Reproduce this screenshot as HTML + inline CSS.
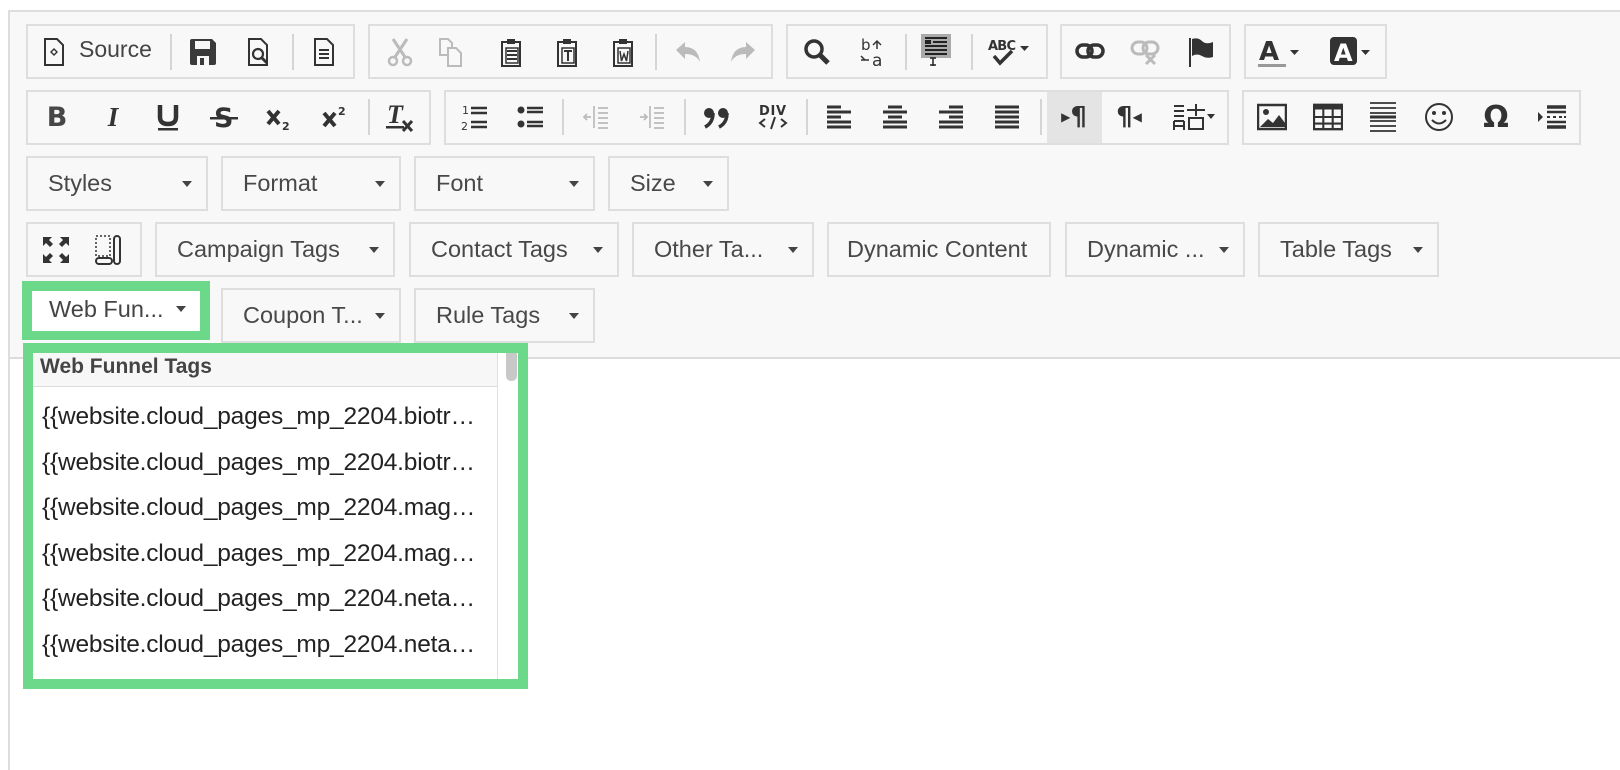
<!DOCTYPE html>
<html><head><meta charset="utf-8">
<style>
*{box-sizing:border-box;margin:0;padding:0}
body{width:1620px;height:754px;background:#fff;position:relative;overflow:hidden;font-family:"Liberation Sans",sans-serif;color:#333}
.ed{position:absolute;left:8px;top:10px;width:1640px;height:760px;border:2px solid #ddd;border-right:none;border-bottom:none}
.tb{position:absolute;left:10px;top:12px;width:1610px;height:347px;background:#f8f8f8;border-bottom:2px solid #dcdcdc}
.g{position:absolute;border:2px solid #dedede;background:#f8f8f8}
.ic{position:absolute;width:30px;height:30px;display:flex;align-items:center;justify-content:center;color:#474747}
.ic svg{display:block}
.sep{position:absolute;width:2px;height:36px;background:#d5d5d5}
.dd{position:absolute;border:2px solid #dedede;background:#f8f8f8;font-size:23.5px;color:#484848;height:55px;line-height:51px;padding-left:20px;white-space:nowrap}
.dd:after{content:"";position:absolute;right:14px;top:23px;border-left:5px solid transparent;border-right:5px solid transparent;border-top:6px solid #444}
.dd.na:after{display:none}
.dd.w:after{top:15px}
.txt{font-weight:bold;font-size:27px;font-family:"DejaVu Sans",sans-serif}
.it{white-space:nowrap;height:45.6px}
</style></head><body>
<div class="ed"></div>
<div class="tb"></div>

<!-- Row 1 -->
<div class="g" style="left:26px;top:24px;width:329px;height:55px"></div>
<div class="g" style="left:368px;top:24px;width:405px;height:55px"></div>
<div class="g" style="left:786px;top:24px;width:262px;height:55px"></div>
<div class="g" style="left:1060px;top:24px;width:171px;height:55px"></div>
<div class="g" style="left:1244px;top:24px;width:143px;height:55px"></div>

<div class="ic" style="left:39px;top:37px"><svg width="22" height="28" viewBox="0 0 22 28"><path d="M2 1h12l6 6v20H2z" fill="none" stroke="#333" stroke-width="2"/><path d="M11 10l4 4-4 4-4-4z" fill="#333"/><path d="M11 12l2 2-2 2-2-2z" fill="#fff"/></svg></div>
<div style="position:absolute;left:79px;top:36px;font-size:23px;color:#444">Source</div>
<div class="sep" style="left:170px;top:34px"></div>
<div class="ic" style="left:188px;top:37px"><svg width="28" height="28" viewBox="0 0 28 28"><path d="M1 3q0-2 2-2h20l4 4v20q0 2-2 2H3q-2 0-2-2z" fill="#3a3a3a"/><rect x="6" y="3" width="15" height="8" fill="#f8f8f8"/><rect x="8" y="18" width="12" height="9" fill="#f8f8f8"/><rect x="11" y="20" width="4" height="7" fill="#3a3a3a"/></svg></div>
<div class="ic" style="left:244px;top:37px"><svg width="24" height="28" viewBox="0 0 24 28"><path d="M2 1h12l6 6v20H2z" fill="none" stroke="#333" stroke-width="2"/><circle cx="11" cy="16" r="5" fill="none" stroke="#333" stroke-width="2.2"/><path d="M14 19l6 6" stroke="#333" stroke-width="3"/></svg></div>
<div class="sep" style="left:292px;top:34px"></div>
<div class="ic" style="left:309px;top:37px"><svg width="22" height="28" viewBox="0 0 22 28"><path d="M2 1h12l6 6v20H2z" fill="none" stroke="#333" stroke-width="2"/><path d="M6 12h10M6 16h10M6 20h10" stroke="#333" stroke-width="2"/></svg></div>

<div class="ic" style="left:385px;top:37px"><svg width="26" height="30" viewBox="0 0 26 30"><path d="M6 2l12 18M20 2L8 20" stroke="#bbb" stroke-width="3"/><circle cx="6" cy="24" r="4" fill="none" stroke="#bbb" stroke-width="2.5"/><circle cx="20" cy="24" r="4" fill="none" stroke="#bbb" stroke-width="2.5"/></svg></div>
<div class="ic" style="left:436px;top:37px"><svg width="26" height="30" viewBox="0 0 26 30"><path d="M2 2h8l4 4v12H2z" fill="none" stroke="#bbb" stroke-width="2"/><path d="M10 11h8l5 5v13H10z" fill="#f8f8f8" stroke="#bbb" stroke-width="2"/></svg></div>
<div class="ic" style="left:496px;top:37px"><svg width="26" height="30" viewBox="0 0 26 30"><path d="M4 5h18v24H4z" fill="none" stroke="#333" stroke-width="2"/><rect x="9" y="2" width="8" height="5" fill="#333"/><path d="M9 14h10M9 18h10M9 22h10" stroke="#333" stroke-width="2"/><rect x="8" y="11" width="12" height="15" fill="none" stroke="#333" stroke-width="1.5"/></svg></div>
<div class="ic" style="left:552px;top:37px"><svg width="26" height="30" viewBox="0 0 26 30"><path d="M4 5h18v24H4z" fill="none" stroke="#333" stroke-width="2"/><rect x="9" y="2" width="8" height="5" fill="#333"/><rect x="8" y="11" width="12" height="15" fill="none" stroke="#333" stroke-width="1.5"/><path d="M10 14h8M14 14v10" stroke="#333" stroke-width="2"/></svg></div>
<div class="ic" style="left:608px;top:37px"><svg width="26" height="30" viewBox="0 0 26 30"><path d="M4 5h18v24H4z" fill="none" stroke="#333" stroke-width="2"/><rect x="9" y="2" width="8" height="5" fill="#333"/><rect x="8" y="11" width="12" height="15" fill="none" stroke="#333" stroke-width="1.5"/><path d="M10 14l1.5 10 2.5-7 2.5 7 1.5-10" fill="none" stroke="#333" stroke-width="1.5"/></svg></div>
<div class="sep" style="left:655px;top:34px"></div>
<div class="ic" style="left:673px;top:37px"><svg width="28" height="22" viewBox="0 0 28 22"><path d="M2 9l9-8v5q13 0 15 15q-4-8-15-8v5z" fill="#bbb"/></svg></div>
<div class="ic" style="left:728px;top:37px"><svg width="28" height="22" viewBox="0 0 28 22"><path d="M26 9l-9-8v5Q4 6 2 21q4-8 15-8v5z" fill="#bbb"/></svg></div>

<div class="ic" style="left:802px;top:37px"><svg width="28" height="28" viewBox="0 0 28 28"><circle cx="11" cy="11" r="8" fill="none" stroke="#333" stroke-width="3.5"/><path d="M17 17l8 8" stroke="#333" stroke-width="5"/></svg></div>
<div class="ic" style="left:858px;top:37px"><svg width="28" height="32" viewBox="0 0 28 32"><text x="2" y="14" font-size="15" font-family="DejaVu Sans" fill="#333">b</text><text x="13" y="30" font-size="17" font-family="DejaVu Sans" fill="#333">a</text><path d="M14 9l4-4 4 4M18 5v8M2 20l4 4M2 24h8" fill="none" stroke="#333" stroke-width="1.5"/></svg></div>
<div class="sep" style="left:905px;top:34px"></div>
<div class="ic" style="left:921px;top:35px"><svg width="30" height="32" viewBox="0 0 30 32"><rect x="0" y="0" width="30" height="24" fill="#aaa"/><path d="M4 4h22M12 8h14M4 12h22M4 16h22M4 20h22" stroke="#222" stroke-width="2"/><rect x="4" y="6" width="6" height="4" fill="#222"/><path d="M12 24v8M9 24h6M9 31h6" stroke="#222" stroke-width="1.5"/></svg></div>
<div class="sep" style="left:971px;top:34px"></div>
<div class="ic" style="left:988px;top:37px;width:44px"><svg width="44" height="32" viewBox="0 0 44 32"><text x="0" y="14" font-size="13" font-family="DejaVu Sans" font-weight="bold" fill="#333" textLength="28">ABC</text><path d="M6 20l6 7 12-12" fill="none" stroke="#333" stroke-width="3.5"/><path d="M32 10h9l-4.5 5z" fill="#333"/></svg></div>

<div class="ic" style="left:1075px;top:37px"><svg width="30" height="20" viewBox="0 0 30 20"><rect x="2" y="3" width="15" height="12" rx="6" fill="none" stroke="#333" stroke-width="3.5"/><rect x="13" y="3" width="15" height="12" rx="6" fill="none" stroke="#333" stroke-width="3.5"/></svg></div>
<div class="ic" style="left:1130px;top:37px"><svg width="30" height="30" viewBox="0 0 30 30"><rect x="2" y="5" width="15" height="12" rx="6" fill="none" stroke="#bbb" stroke-width="3"/><rect x="13" y="5" width="15" height="12" rx="6" fill="none" stroke="#bbb" stroke-width="3"/><path d="M16 18l9 9M25 18l-9 9" stroke="#bbb" stroke-width="3"/></svg></div>
<div class="ic" style="left:1187px;top:37px"><svg width="28" height="30" viewBox="0 0 28 30"><path d="M2 1v29" stroke="#333" stroke-width="2"/><path d="M4 2q6-2 10 2t11 1v15q-6 2-11-1t-10 0z" fill="#333"/></svg></div>

<div class="ic" style="left:1258px;top:37px;width:44px"><svg width="44" height="32" viewBox="0 0 44 32"><text x="1" y="24" font-size="26" font-family="DejaVu Sans" font-weight="bold" fill="#333">A</text><rect x="0" y="28" width="28" height="3" fill="#999"/><path d="M32 14h9l-4.5 5z" fill="#333"/></svg></div>
<div class="ic" style="left:1330px;top:37px;width:44px"><svg width="44" height="32" viewBox="0 0 44 32"><rect x="0" y="1" width="27" height="28" rx="4" fill="#333"/><text x="4" y="25" font-size="24" font-family="DejaVu Sans" font-weight="bold" fill="#fff">A</text><path d="M31 14h9l-4.5 5z" fill="#333"/></svg></div>

<!-- Row 2 -->
<div class="g" style="left:26px;top:90px;width:405px;height:55px"></div>
<div class="g" style="left:444px;top:90px;width:785px;height:55px"></div>
<div class="g" style="left:1242px;top:90px;width:339px;height:55px"></div>
<div style="position:absolute;left:1047px;top:92px;width:55px;height:51px;background:#e4e4e4"></div>

<div class="ic txt" style="left:42px;top:102px">B</div>
<div class="ic" style="left:98px;top:102px;font:italic bold 27px 'Liberation Serif',serif;color:#333">I</div>
<div class="ic" style="left:153px;top:102px"><svg width="24" height="30" viewBox="0 0 24 30"><path d="M4 3v12q0 7 8 7t8-7V3" fill="none" stroke="#333" stroke-width="4.5"/><rect x="2" y="26" width="20" height="2.5" fill="#333"/></svg></div>
<div class="ic" style="left:209px;top:102px"><svg width="28" height="30" viewBox="0 0 28 30"><text x="4" y="25" font-size="27" font-family="DejaVu Sans" font-weight="bold" fill="#333">S</text><rect x="0" y="15" width="28" height="2.5" fill="#333"/></svg></div>
<div class="ic" style="left:264px;top:102px"><svg width="28" height="30" viewBox="0 0 28 30"><path d="M3 9l11 13M14 9L3 22" stroke="#333" stroke-width="4"/><text x="17" y="28" font-size="11" font-family="DejaVu Sans" font-weight="bold" fill="#333">2</text></svg></div>
<div class="ic" style="left:320px;top:102px"><svg width="28" height="30" viewBox="0 0 28 30"><path d="M3 11l11 13M14 11L3 24" stroke="#333" stroke-width="4"/><text x="17" y="13" font-size="11" font-family="DejaVu Sans" font-weight="bold" fill="#333">2</text></svg></div>
<div class="sep" style="left:368px;top:99px"></div>
<div class="ic" style="left:386px;top:102px"><svg width="30" height="32" viewBox="0 0 30 32"><text x="1" y="22" font-size="26" font-family="Liberation Serif" font-style="italic" font-weight="bold" fill="#333">T</text><rect x="0" y="25" width="18" height="2.5" fill="#333"/><path d="M17 20l9 10M26 20l-9 10" stroke="#333" stroke-width="3"/></svg></div>

<div class="ic" style="left:460px;top:102px"><svg width="28" height="30" viewBox="0 0 28 30"><text x="1" y="12" font-size="11" font-family="DejaVu Sans" fill="#333">1</text><text x="0" y="28" font-size="11" font-family="DejaVu Sans" fill="#333">2</text><path d="M10 6h16M10 11h16M10 20h16M10 25h16" stroke="#333" stroke-width="2.5"/></svg></div>
<div class="ic" style="left:516px;top:102px"><svg width="28" height="30" viewBox="0 0 28 30"><circle cx="4" cy="8" r="3.5" fill="#333"/><circle cx="4" cy="22" r="3.5" fill="#333"/><path d="M10 6h16M10 10h16M10 20h16M10 24h16" stroke="#333" stroke-width="2.5"/></svg></div>
<div class="sep" style="left:562px;top:99px"></div>
<div class="ic" style="left:581px;top:102px"><svg width="28" height="30" viewBox="0 0 28 30"><path d="M12 4v22M16 6h10M16 11h10M16 16h10M16 21h10M16 26h10M9 15H2M5 12l-3 3 3 3" fill="none" stroke="#bbb" stroke-width="1.7"/></svg></div>
<div class="ic" style="left:637px;top:102px"><svg width="28" height="30" viewBox="0 0 28 30"><path d="M12 4v22M16 6h10M16 11h10M16 16h10M16 21h10M16 26h10M2 15h7M6 12l3 3-3 3" fill="none" stroke="#bbb" stroke-width="1.7"/></svg></div>
<div class="sep" style="left:684px;top:99px"></div>
<div class="ic" style="left:702px;top:102px"><svg width="30" height="30" viewBox="0 0 30 30"><circle cx="7" cy="11" r="5" fill="#333"/><path d="M11 11q0 10-8 14" fill="none" stroke="#333" stroke-width="3.5"/><circle cx="21" cy="11" r="5" fill="#333"/><path d="M25 11q0 10-8 14" fill="none" stroke="#333" stroke-width="3.5"/></svg></div>
<div class="ic" style="left:758px;top:102px"><svg width="30" height="30" viewBox="0 0 30 30"><text x="1" y="13" font-size="13" font-family="DejaVu Sans" font-weight="bold" fill="#333" textLength="27">DIV</text><path d="M7 17l-5 4 5 4M23 17l5 4-5 4M17 15l-4 12" fill="none" stroke="#333" stroke-width="2"/></svg></div>
<div class="sep" style="left:806px;top:99px"></div>
<div class="ic" style="left:824px;top:102px"><svg width="26" height="26" viewBox="0 0 26 26"><path d="M1 3h14M1 8h24M1 13h14M1 18h24M1 23h24" stroke="#333" stroke-width="3"/></svg></div>
<div class="ic" style="left:880px;top:102px"><svg width="26" height="26" viewBox="0 0 26 26"><path d="M6 3h14M1 8h24M6 13h14M1 18h24M1 23h24" stroke="#333" stroke-width="3"/></svg></div>
<div class="ic" style="left:936px;top:102px"><svg width="26" height="26" viewBox="0 0 26 26"><path d="M11 3h14M1 8h24M11 13h14M1 18h24M1 23h24" stroke="#333" stroke-width="3"/></svg></div>
<div class="ic" style="left:992px;top:102px"><svg width="26" height="26" viewBox="0 0 26 26"><path d="M1 3h24M1 8h24M1 13h24M1 18h24M1 23h24" stroke="#333" stroke-width="3"/></svg></div>
<div class="sep" style="left:1040px;top:99px"></div>
<div class="ic" style="left:1059px;top:102px;font:bold 26px 'DejaVu Sans',sans-serif;color:#333"><span style="font-size:12px">▶</span>¶</div>
<div class="ic" style="left:1114px;top:102px;font:bold 26px 'DejaVu Sans',sans-serif;color:#333">¶<span style="font-size:12px">◀</span></div>
<div class="ic" style="left:1172px;top:102px;width:44px"><svg width="44" height="30" viewBox="0 0 44 30"><path d="M2 4h10M2 9h10M2 14h10M2 19h10M2 24h10M2 19v9M12 19v9M15 8h18M24 2v12M17 16h14v11H17z" fill="none" stroke="#333" stroke-width="2"/><path d="M35 12h8l-4 5z" fill="#333"/></svg></div>

<div class="ic" style="left:1257px;top:102px"><svg width="30" height="28" viewBox="0 0 30 28"><rect x="1" y="2" width="28" height="24" fill="none" stroke="#333" stroke-width="2.5"/><circle cx="9" cy="9" r="3" fill="#333"/><path d="M3 24l8-8 5 4 6-8 6 8v4z" fill="#333"/></svg></div>
<div class="ic" style="left:1313px;top:102px"><svg width="32" height="30" viewBox="0 0 32 30"><rect x="1" y="2" width="30" height="26" fill="none" stroke="#333" stroke-width="2.5"/><rect x="1" y="2" width="30" height="5" fill="#333"/><path d="M1 15h30M1 22h30M11 7v21M21 7v21" stroke="#333" stroke-width="2.2"/></svg></div>
<div class="ic" style="left:1368px;top:102px"><svg width="28" height="32" viewBox="0 0 28 32"><path d="M1 2h26M1 7h26M1 12h26M1 20h26M1 25h26M1 30h26" stroke="#333" stroke-width="1.7"/><path d="M1 16h26" stroke="#333" stroke-width="3"/></svg></div>
<div class="ic" style="left:1424px;top:102px"><svg width="30" height="30" viewBox="0 0 30 30"><circle cx="15" cy="15" r="13" fill="none" stroke="#333" stroke-width="2"/><circle cx="10" cy="11" r="2" fill="#333"/><circle cx="20" cy="11" r="2" fill="#333"/><path d="M8 18q7 7 14 0" fill="none" stroke="#333" stroke-width="2"/></svg></div>
<div class="ic" style="left:1481px;top:102px;font:bold 30px 'DejaVu Sans',sans-serif;color:#333">Ω</div>
<div class="ic" style="left:1537px;top:102px"><svg width="30" height="26" viewBox="0 0 30 26"><path d="M1 8l5 5-5 5z" fill="#333"/><path d="M10 3h19M10 23h19" stroke="#333" stroke-width="3.5"/><path d="M10 13h3M16 13h3M22 13h3M27 13h2" stroke="#333" stroke-width="2"/><path d="M10 8h19M10 18h19" stroke="#333" stroke-width="2.5"/></svg></div>

<!-- Row 3 -->
<div class="dd" style="left:26px;top:156px;width:182px">Styles</div>
<div class="dd" style="left:221px;top:156px;width:180px">Format</div>
<div class="dd" style="left:414px;top:156px;width:181px">Font</div>
<div class="dd" style="left:608px;top:156px;width:121px">Size</div>

<!-- Row 4 -->
<div class="g" style="left:26px;top:222px;width:116px;height:55px"></div>
<div class="ic" style="left:41px;top:235px"><svg width="30" height="30" viewBox="0 0 30 30"><path d="M2 2h9l-3 3 4 4-3 3-4-4-3 3zM28 2v9l-3-3-4 4-3-3 4-4-3-3zM2 28v-9l3 3 4-4 3 3-4 4 3 3zM28 28h-9l3-3-4-4 3-3 4 4 3-3z" fill="#333"/></svg></div>
<div class="ic" style="left:93px;top:235px"><svg width="28" height="32" viewBox="0 0 28 32"><rect x="2" y="2" width="14" height="20" fill="none" stroke="#333" stroke-width="1.5" stroke-dasharray="2 2"/><rect x="20" y="2" width="6" height="28" rx="3" fill="none" stroke="#333" stroke-width="2"/><rect x="2" y="24" width="16" height="6" rx="3" fill="none" stroke="#333" stroke-width="2"/></svg></div>
<div class="dd" style="left:155px;top:222px;width:240px">Campaign Tags</div>
<div class="dd" style="left:409px;top:222px;width:210px">Contact Tags</div>
<div class="dd" style="left:632px;top:222px;width:182px">Other Ta...</div>
<div class="dd na" style="left:827px;top:222px;width:224px;padding-left:18px">Dynamic Content</div>
<div class="dd" style="left:1065px;top:222px;width:180px">Dynamic ...</div>
<div class="dd" style="left:1258px;top:222px;width:181px">Table Tags</div>

<!-- Row 5 -->
<div style="position:absolute;left:22px;top:281px;width:188px;height:59px;background:#6cd88a"></div>
<div class="dd w" style="left:32px;top:291px;width:168px;height:40px;line-height:36px;border:none;background:#fff;padding-left:17px;color:#444">Web Fun...</div>
<div class="dd" style="left:221px;top:288px;width:180px">Coupon T...</div>
<div class="dd" style="left:414px;top:288px;width:181px">Rule Tags</div>

<!-- Dropdown panel -->
<div style="position:absolute;left:23px;top:343px;width:505px;height:346px;background:#6cd88a"></div>
<div style="position:absolute;left:33px;top:353px;width:485px;height:326px;background:#fff;overflow:hidden">
  <div style="position:absolute;left:0;top:0;width:464px;height:34px;background:#f7f7f7;border-bottom:1px solid #ddd;font:bold 21px 'Liberation Sans',sans-serif;color:#444;padding-left:7px;padding-top:3px;line-height:22px">Web Funnel Tags</div>
  <div style="position:absolute;left:464px;top:0;width:1px;height:326px;background:#d8e2ee"></div>
  <div style="position:absolute;left:473px;top:0;width:11px;height:28px;background:#c8c8c8;border-radius:0 0 5px 5px"></div>
  <div style="position:absolute;left:9px;top:41px;font:24.5px 'Liberation Sans',sans-serif;letter-spacing:-0.2px;color:#222;line-height:45.6px">
    <div class="it">{{website.cloud_pages_mp_2204.biotr…</div>
    <div class="it">{{website.cloud_pages_mp_2204.biotr…</div>
    <div class="it">{{website.cloud_pages_mp_2204.mag…</div>
    <div class="it">{{website.cloud_pages_mp_2204.mag…</div>
    <div class="it">{{website.cloud_pages_mp_2204.neta…</div>
    <div class="it">{{website.cloud_pages_mp_2204.neta…</div>
  </div>
</div>
</body></html>
